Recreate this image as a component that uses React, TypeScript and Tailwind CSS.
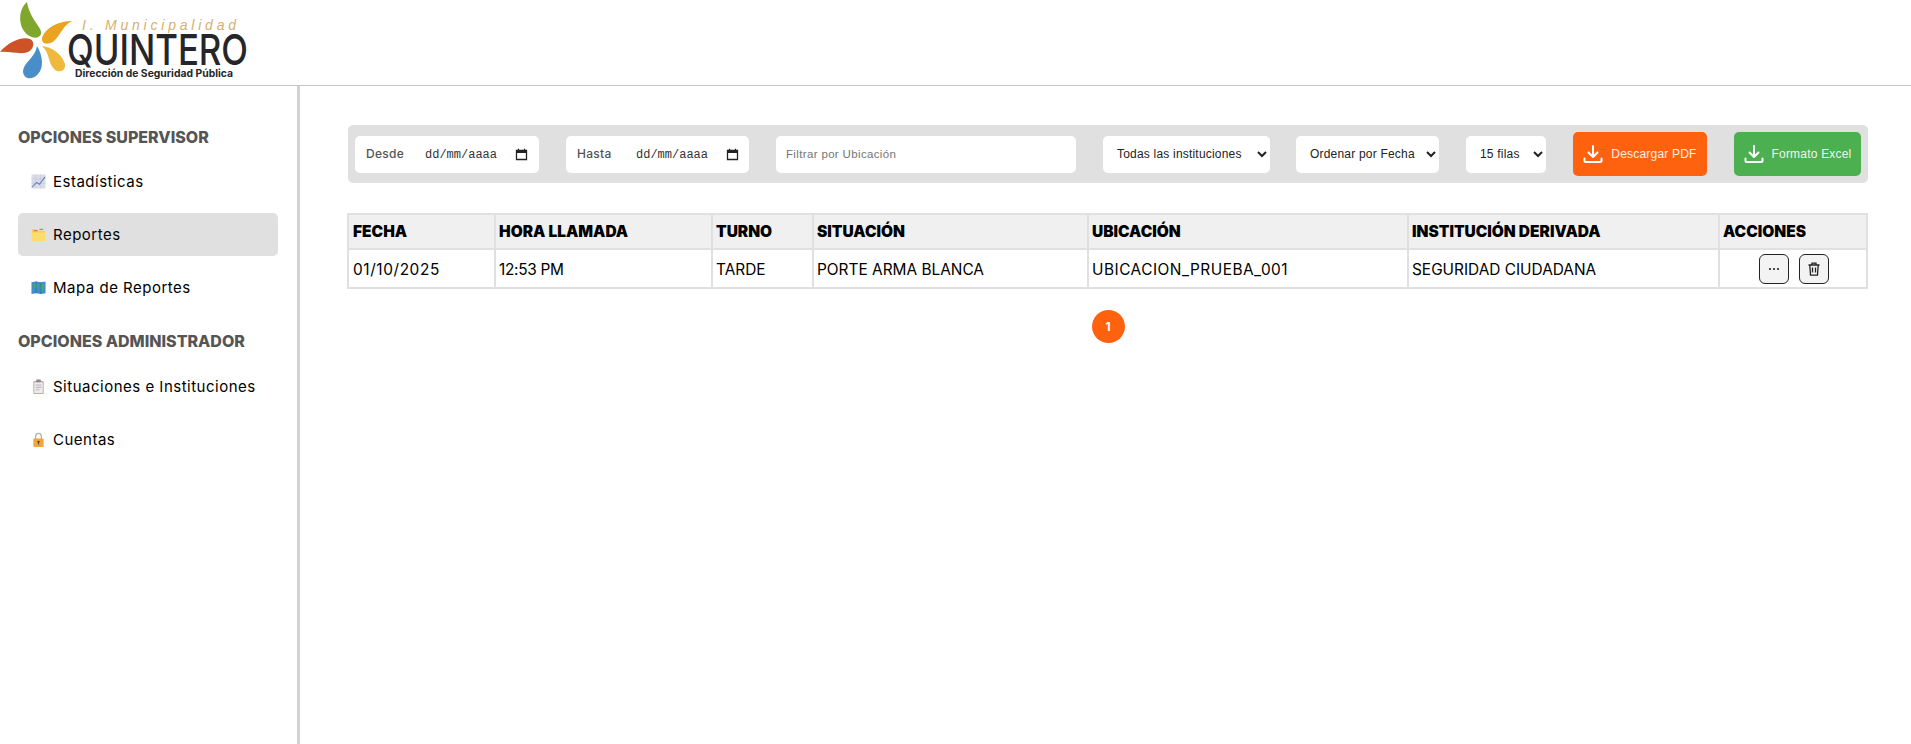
import { ReactNode } from 'react';

const sans = "font-['Inter',sans-serif]";
const arial = "font-['Liberation_Sans',Arial,sans-serif]";

const Logo = () => (
  <svg width="250" height="85" viewBox="0 0 250 85" className="block">
    <path d="M27 2C18 10 19 24 24 31C28 37 38 41 41 34C43 28 30 20 27 2Z" fill="#7fa72e" />
    <path d="M72 21C58 21 45 28 42 38C41 45 49 45 54 41C61 35 62 26 72 21Z" fill="#eba41f" />
    <path d="M0 52C8 42 22 36 30 39C36 42 33 50 28 52C20 55 10 51 0 52Z" fill="#cf5127" />
    <path d="M37 46C43 56 44 68 38 74C32 81 23 79 23 71C24 62 35 58 37 46Z" fill="#4a8ec9" />
    <path d="M42 46C52 47 62 54 65 64C66 72 58 73 54 69C48 63 50 53 42 46Z" fill="#eeb93c" />
    <text x="82" y="30" textLength="154" fontSize="14" fontStyle="italic" fill="#d6b06d" fontFamily="Liberation Sans, sans-serif">
      I. Municipalidad
    </text>
    <text x="67" y="65" textLength="181" lengthAdjust="spacingAndGlyphs" fontSize="43" fontWeight="500" fill="#26262a" fontFamily="Inter, sans-serif">
      QUINTERO
    </text>
    <text x="75" y="77" textLength="158" lengthAdjust="spacingAndGlyphs" fontSize="10" fontWeight="700" fill="#26262a" fontFamily="Inter, sans-serif">
      Dirección de Seguridad Pública
    </text>
  </svg>
);

const ChartIcon = () => (
  <svg width="16" height="16" viewBox="0 0 16 16">
    <rect x="0.5" y="0.5" width="15" height="15" fill="#dcdce8" />
    <path d="M0.5 5H15.5M0.5 10H15.5M5 0.5V15.5M10 0.5V15.5" stroke="#c6c6d4" strokeWidth="0.6" />
    <path d="M1 14L6 9L9 11L15 3" stroke="#5f88c6" strokeWidth="1.2" fill="none" />
  </svg>
);

const FolderIcon = () => (
  <svg width="16" height="16" viewBox="0 0 16 16">
    <path d="M1 2.5H6L7.5 4H15V15H1Z" fill="#f8d24f" />
    <path d="M3 4H7" stroke="#e2574c" strokeWidth="1" />
    <path d="M9 2.5H13" stroke="#77a83c" strokeWidth="1.2" />
    <path d="M1 6H15V15H1Z" fill="#fbdc6c" />
  </svg>
);

const MapIcon = () => (
  <svg width="16" height="16" viewBox="0 0 16 16">
    <path d="M0.5 2.5L5.5 1.5L10.5 2.5L15.5 1.5V14L10.5 15L5.5 14L0.5 15Z" fill="#3f8fc9" />
    <path d="M3 4L7 3.5L8 7L5 9L3 7ZM10 5L14 4.5L13.5 10L10.5 12L9.5 8Z" fill="#4aa77f" />
    <path d="M5.5 1.5V14M10.5 2.5V15" stroke="#2d6d9e" strokeWidth="0.7" />
  </svg>
);

const ClipboardIcon = () => (
  <svg width="16" height="16" viewBox="0 0 16 16">
    <rect x="2.5" y="2" width="11" height="14" rx="1" fill="#d8a27c" />
    <rect x="3.5" y="3.5" width="9" height="11.5" fill="#ecebf2" />
    <rect x="5.5" y="0.5" width="5" height="3" rx="0.7" fill="#8b8b97" />
    <path d="M5 6.5H11M5 9H11M5 11.5H9" stroke="#a9a9b8" strokeWidth="0.9" />
  </svg>
);

const LockIcon = () => (
  <svg width="16" height="16" viewBox="0 0 16 16">
    <path d="M5 8V4.5a3 3 0 0 1 6 0V8" stroke="#b6b3aa" strokeWidth="1.4" fill="none" />
    <rect x="2.5" y="7" width="11" height="9" rx="1" fill="#f0a63a" />
    <circle cx="8" cy="10.5" r="1.2" fill="#4b3a22" />
    <path d="M8 11v2.5" stroke="#4b3a22" strokeWidth="0.9" />
  </svg>
);

const NavItem = ({ icon, label, active }: { icon: ReactNode; label: string; active?: boolean }) => (
  <div
    className={`flex h-[43px] items-center gap-[7px] rounded-[5px] pl-[13px] text-[15px] tracking-[0.5px] text-black ${active ? 'bg-[#e0e0e0]' : ''}`}
  >
    <span className="flex w-[15px] justify-center [&>svg]:h-[15px] [&>svg]:w-[15px]">{icon}</span>
    <span className="pt-[2px]">{label}</span>
  </div>
);

const CalendarIcon = () => (
  <svg width="13" height="13" viewBox="0 0 13 13" className="shrink-0">
    <path d="M1.5 2.5H11.5V11.5H1.5Z" fill="none" stroke="#222" strokeWidth="1.3" />
    <path d="M1.5 2.2H11.5V5H1.5Z" fill="#222" />
    <path d="M3.5 0.8V2.5M9.5 0.8V2.5" stroke="#222" strokeWidth="1.2" />
  </svg>
);

const DateField = ({ label, className }: { label: string; className: string }) => (
  <div className={`flex h-[37px] items-center rounded-[5px] bg-white pl-[11px] ${className}`}>
    <span className={`w-[59px] text-[12px] font-medium tracking-[0.3px] text-[#555] ${sans}`}>{label}</span>
    <span className="w-[73px] pt-[1px] font-['Liberation_Mono',monospace] text-[12px] text-[#333]">dd/mm/aaaa</span>
    <span className="ml-[17px]">
      <CalendarIcon />
    </span>
  </div>
);

const FilterSelect = ({ text, className }: { text: string; className: string }) => (
  <select
    defaultValue={text}
    className={`h-[37px] rounded-[5px] bg-white pl-[10px] text-[12px] tracking-[0.2px] text-[#222] ${arial} ${className}`}
  >
    <option>{text}</option>
  </select>
);

const DownloadIcon = () => (
  <svg width="20" height="20" viewBox="0 0 20 20" fill="none" stroke="#fff" strokeWidth="2" strokeLinecap="round" strokeLinejoin="round">
    <path d="M10 2V13M5.5 8.5L10 13L14.5 8.5" />
    <path d="M1.5 14.5V17a1 1 0 0 0 1 1H17.5a1 1 0 0 0 1-1V14.5" />
  </svg>
);

const ExportButton = ({ label, className }: { label: string; className: string }) => (
  <button
    className={`flex h-[44px] items-center justify-center gap-[8px] rounded-[5px] text-[12px] tracking-[0.2px] text-white/90 ${arial} ${className}`}
  >
    <DownloadIcon />
    {label}
  </button>
);

const th = `border-2 border-[#e0e0e0] bg-[#f0f0f0] px-[3px] text-left text-[15.5px] font-black text-black ${sans}`;
const td = `border-2 border-[#e0e0e0] px-[3px] pt-[2px] text-[15.4px] text-black ${sans}`;

const ActionButton = ({ children }: { children: ReactNode }) => (
  <button className="flex h-[30px] w-[30px] items-center justify-center rounded-[6px] border border-[#222] bg-[#f3f3f3]">
    {children}
  </button>
);

const App = () => {
  return (
    <div className={`flex min-h-screen flex-col bg-white ${sans}`}>
      <header className="h-[86px] border-b border-[#c4c4c4]">
        <Logo />
      </header>

      <div className="flex flex-1">
        <aside className="w-[300px] shrink-0 border-r-[3px] border-[#d2d2d2] pt-[31px] pl-[18px] pr-[19px]">
          <h3 className="mb-[1px] h-[42px] text-[16px] font-extrabold leading-[40px] text-[#555]">OPCIONES SUPERVISOR</h3>
          <nav className="flex flex-col gap-[10px]">
            <NavItem icon={<ChartIcon />} label="Estadísticas" />
            <NavItem icon={<FolderIcon />} label="Reportes" active />
            <NavItem icon={<MapIcon />} label="Mapa de Reportes" />
          </nav>
          <h3 className="mt-[12px] mb-[2px] h-[42px] text-[16px] font-extrabold leading-[40px] text-[#555]">OPCIONES ADMINISTRADOR</h3>
          <nav className="flex flex-col gap-[10px]">
            <NavItem icon={<ClipboardIcon />} label="Situaciones e Instituciones" />
            <NavItem icon={<LockIcon />} label="Cuentas" />
          </nav>
        </aside>

        <main className="flex-1 pt-[39px] pl-[48px] pr-[43px]">
          <div className="flex h-[58px] w-[1520px] items-center rounded-[5px] bg-[#e0e0e0] pl-[7px]">
            <DateField label="Desde" className="w-[184px]" />
            <DateField label="Hasta" className="ml-[27px] w-[183px]" />
            <input
              placeholder="Filtrar por Ubicación"
              className={`ml-[27px] h-[37px] w-[300px] rounded-[5px] bg-white pl-[10px] text-[11.5px] tracking-[0.35px] placeholder:text-[#757575] ${arial}`}
            />
            <FilterSelect text="Todas las instituciones" className="ml-[27px] w-[167px]" />
            <FilterSelect text="Ordenar por Fecha" className="ml-[26px] w-[143px]" />
            <FilterSelect text="15 filas" className="ml-[27px] w-[80px]" />
            <ExportButton label="Descargar PDF" className="ml-[27px] w-[134px] bg-[#ff620e]" />
            <ExportButton label="Formato Excel" className="ml-[27px] w-[127px] bg-[#4caf50]" />
          </div>

          <table className="mt-[30px] -ml-[1px] w-[1519px] table-fixed border-collapse">
            <colgroup>
              <col className="w-[147px]" />
              <col className="w-[217px]" />
              <col className="w-[101px]" />
              <col className="w-[275px]" />
              <col className="w-[320px]" />
              <col className="w-[311px]" />
              <col className="w-[148px]" />
            </colgroup>
            <thead>
              <tr className="h-[35px]">
                <th className={`${th} pl-[4px]`}>FECHA</th>
                <th className={th}>HORA LLAMADA</th>
                <th className={th}>TURNO</th>
                <th className={th}>SITUACIÓN</th>
                <th className={th}>UBICACIÓN</th>
                <th className={th}>INSTITUCIÓN DERIVADA</th>
                <th className={th}>ACCIONES</th>
              </tr>
            </thead>
            <tbody>
              <tr className="h-[39px]">
                <td className={`${td} pl-[4px] tracking-[0.6px]`}>01/10/2025</td>
                <td className={`${td} tracking-[-0.3px]`}>12:53 PM</td>
                <td className={td}>TARDE</td>
                <td className={td}>PORTE ARMA BLANCA</td>
                <td className={`${td} tracking-[0.5px]`}>UBICACION_PRUEBA_001</td>
                <td className={td}>SEGURIDAD CIUDADANA</td>
                <td className="border-2 border-[#e0e0e0] px-[3px]">
                  <div className="flex justify-center gap-[10px] pl-[2px]">
                    <ActionButton>
                      <svg width="14" height="14" viewBox="0 0 14 14" fill="#222">
                        <circle cx="3" cy="7" r="1.1" />
                        <circle cx="7" cy="7" r="1.1" />
                        <circle cx="11" cy="7" r="1.1" />
                      </svg>
                    </ActionButton>
                    <ActionButton>
                      <svg width="16" height="16" viewBox="0 0 16 16" fill="none" stroke="#222" strokeWidth="1.3">
                        <path d="M2.5 4H13.5M6 4V2.2H10V4M3.8 4L4.5 14.2H11.5L12.2 4M6.5 6.5V11.5M9.5 6.5V11.5" />
                      </svg>
                    </ActionButton>
                  </div>
                </td>
              </tr>
            </tbody>
          </table>

          <div className="mt-[21px] flex w-[1520px] justify-center">
            <span className="flex h-[33px] w-[33px] items-center justify-center rounded-full bg-[#ff620e] text-[12px] font-bold text-white">
              1
            </span>
          </div>
        </main>
      </div>
    </div>
  );
};

export default App;
